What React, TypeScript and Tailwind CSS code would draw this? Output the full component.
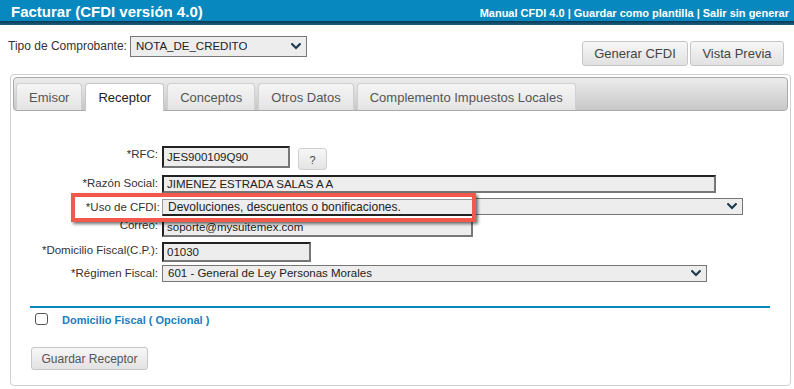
import React from "react";

const Chevron = () => (
  <svg width="10" height="7" viewBox="0 0 10 7" className="shrink-0">
    <path d="M1.2 1.2 L5 5 L8.8 1.2" fill="none" stroke="#1d3a50" strokeWidth="2.2" strokeLinecap="square" />
  </svg>
);

const Select = ({ w, h, text, size = "text-[11.5px]", hideText = false }: { w: string; h: string; text: string; size?: string; hideText?: boolean }) => (
  <div className={`${w} ${h} ${size} border border-[#777] bg-[#ededed] flex items-center justify-between pl-[5px] pr-[5px] text-[#222] leading-[13px]`}>
    <span className={hideText ? "invisible whitespace-nowrap overflow-hidden" : "whitespace-nowrap overflow-hidden"}>{text}</span>
    <Chevron />
  </div>
);

const Input = ({ w, h, text }: { w: string; h: string; text: string }) => (
  <div className={`${w} ${h} border-2 border-t-[#222] border-l-[#222] border-r-[#777] border-b-[#777] bg-[#ededed] flex items-center pl-[3px] text-[11.5px] leading-[13px] text-[#222] whitespace-nowrap overflow-hidden`}>
    {text}
  </div>
);

const Label = ({ children, hidden = false }: { children: React.ReactNode; hidden?: boolean }) => (
  <div className={`w-[128px] shrink-0 text-right pt-[2px] text-[11.5px] leading-[13px] text-[#333] whitespace-nowrap ${hidden ? "invisible" : ""}`}>{children}</div>
);

const Tab = ({ label, active = false }: { label: string; active?: boolean }) => (
  <div
    className={
      active
        ? "h-[28px] mb-[-1px] px-[12px] border border-b-0 border-[#c6c6c6] rounded-t-[4px] bg-white flex items-center text-[13px] leading-[15px] text-[#222] whitespace-nowrap"
        : "h-[27px] px-[12px] border border-b-0 border-[#d0d0d0] rounded-t-[4px] bg-linear-to-b from-[#f5f5f5] to-[#e4e4e4] flex items-center text-[13px] leading-[15px] text-[#555] whitespace-nowrap"
    }
  >
    {label}
  </div>
);

export default function App() {
  return (
    <div className="relative w-[794px] h-[389px] bg-white overflow-hidden font-['Liberation_Sans',Arial,sans-serif]">
      {/* Header */}
      <div className="h-[21px] bg-[#0788be] flex justify-between items-baseline pt-[2px] leading-[19px] pl-[11px] pr-[5px] text-white">
        <div className="text-[15px] font-bold whitespace-nowrap">Facturar (CFDI versión 4.0)</div>
        <div className="text-[11px] font-bold whitespace-nowrap">Manual CFDI 4.0 | Guardar como plantilla | Salir sin generar</div>
      </div>
      <div className="h-[4px] bg-linear-to-b from-[#0a3a55] to-[#1c5f80]" />

      {/* Top row */}
      <div className="flex justify-between pl-[8px] pr-[10px] pt-[11px]">
        <div className="flex items-center gap-[3px] h-[21px]">
          <span className="text-[12px] leading-[13px] text-[#333] whitespace-nowrap">Tipo de Comprobante:</span>
          <Select w="w-[177px]" h="h-[21px]" text="NOTA_DE_CREDITO" />
        </div>
        <div className="flex gap-[2px] mt-[5px]">
          <div className="w-[106px] h-[25px] border border-[#c6c6c6] rounded-[3px] bg-linear-to-b from-[#f7f7f7] to-[#e1e1e1] flex items-center justify-center text-[13px] text-[#444]">Generar CFDI</div>
          <div className="w-[94px] h-[25px] border border-[#c6c6c6] rounded-[3px] bg-linear-to-b from-[#f7f7f7] to-[#e1e1e1] flex items-center justify-center text-[13px] text-[#444]">Vista Previa</div>
        </div>
      </div>

      {/* Panel */}
      <div className="ml-[10px] mt-[8px] w-[781px] h-[312px] border border-[#d0d0d0] rounded-[4px] p-[2px] pb-0">
        <div className="h-[34px] border border-[#a9a9a9] rounded-[4px] bg-linear-to-b from-[#ececec] to-[#c8c8c8] flex items-end gap-[3px] px-[2px]">
          <Tab label="Emisor" />
          <Tab label="Receptor" active />
          <Tab label="Conceptos" />
          <Tab label="Otros Datos" />
          <Tab label="Complemento Impuestos Locales" />
        </div>

        <div className="pl-[17px] pr-[18px] pt-[35px]">
          {/* RFC */}
          <div className="flex h-[24px]">
            <Label>*RFC:</Label>
            <div className="ml-[4px] flex items-start">
              <Input w="w-[128px]" h="h-[22px]" text="JES900109Q90" />
              <div className="ml-[8px] mt-[2px] w-[29px] h-[22px] border border-[#cfcfcf] rounded-[3px] bg-linear-to-b from-[#f7f7f7] to-[#e4e4e4] flex items-end justify-center pb-[2px] text-[11px] leading-[13px] text-[#444]">?</div>
            </div>
          </div>
          {/* Razón */}
          <div className="flex h-[18px] mt-[5px]">
            <Label>*Razón Social:</Label>
            <div className="ml-[4px]">
              <Input w="w-[554px]" h="h-[18px]" text="JIMENEZ ESTRADA SALAS A A" />
            </div>
          </div>
          {/* Uso (covered by the highlight annotation) */}
          <div className="flex h-[17px] mt-[5px]">
            <Label hidden>*Uso de CFDI:</Label>
            <div className="ml-[4px]">
              <Select w="w-[581px]" h="h-[17px]" text="Devoluciones, descuentos o bonificaciones." hideText />
            </div>
          </div>
          {/* Correo */}
          <div className="flex h-[20px] mt-[2px]">
            <Label>Correo:</Label>
            <div className="ml-[4px]">
              <Input w="w-[311px]" h="h-[20px]" text="soporte@mysuitemex.com" />
            </div>
          </div>
          {/* Domicilio */}
          <div className="flex h-[20px] mt-[5px]">
            <Label>*Domicilio Fiscal(C.P.):</Label>
            <div className="ml-[4px]">
              <Input w="w-[149px]" h="h-[20px]" text="01030" />
            </div>
          </div>
          {/* Régimen */}
          <div className="flex h-[17px] mt-[3px]">
            <Label>*Régimen Fiscal:</Label>
            <div className="ml-[4px]">
              <Select w="w-[545px]" h="h-[17px]" text="601 - General de Ley Personas Morales" />
            </div>
          </div>

          <div className="mt-[24px] h-[2px] bg-[#0a86bb]" />

          <div className="flex items-center mt-[4px] pl-[5px] h-[14px]">
            <div className="w-[13px] h-[12px] border border-[#555] rounded-[3px] bg-white" />
            <span className="ml-[14px] mt-[3px] text-[11px] leading-[13px] font-bold text-[#1d7cbf] whitespace-nowrap">Domicilio Fiscal ( Opcional )</span>
          </div>

          <div className="mt-[21px] ml-[1px] w-[117px] h-[23px] border border-[#c6c6c6] rounded-[3px] bg-linear-to-b from-[#f7f7f7] to-[#e2e2e2] flex items-center justify-center text-[12px] text-[#555]">
            Guardar Receptor
          </div>
        </div>
      </div>

      {/* Highlight annotation */}
      <div className="absolute left-[71px] top-[193px] w-[405px] h-[29px] border-4 border-[#f2584c] bg-white shadow-[2px_2px_3px_rgba(0,0,0,0.55)] overflow-hidden flex">
        <div className="w-[85px] shrink-0 text-right pt-[4px] text-[11.5px] leading-[13px] text-[#333] whitespace-nowrap">*Uso de CFDI:</div>
        <div className="ml-[2px] mt-[2px] h-[17px] flex-1 border-t border-l border-[#999] border-b-2 border-b-[#222] bg-[#eee] flex items-center pl-[5px] text-[12px] leading-[14px] text-[#222] whitespace-nowrap">
          Devoluciones, descuentos o bonificaciones.
        </div>
      </div>
    </div>
  );
}
